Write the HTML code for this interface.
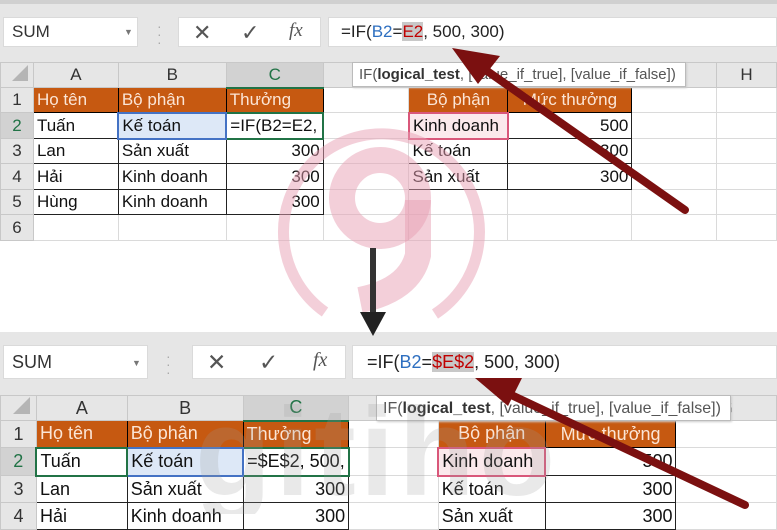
<!DOCTYPE html>
<html><head><meta charset="utf-8"><style>
body{margin:0;width:777px;height:514px;overflow:hidden;background:#fff;font-family:"Liberation Sans",sans-serif;position:relative}
.a{position:absolute}
.bar{background:#e6e6e6}
.box{background:#fff;border:1px solid #dadada;box-sizing:border-box}
table{border-collapse:collapse;table-layout:fixed;position:absolute}
td{border:1px solid #dadada;padding:0 3px;white-space:nowrap;overflow:hidden;color:#111}
td.h{background:#e6e6e6;color:#333;text-align:center;border-color:#c8c8c8}
td.hc{background:#d2d2d2;color:#217346;border-bottom:2px solid #217346}
td.rh{background:#e6e6e6;color:#333;text-align:center;border-color:#c8c8c8}
td.rhs{background:#d2d2d2;color:#217346}
td.o{background:#c65911;color:#fbe5d6;border-color:#000}
td.d{border:1px solid #222}
td.r{text-align:right}
.tip{position:absolute;background:#fff;border:1px solid #bbb;color:#555;box-shadow:1px 1px 2px #ccc;white-space:nowrap}
</style></head><body>

<div class="a bar" style="left:0;top:0;width:777px;height:62px"></div>
<div class="a" style="left:0;top:0;width:777px;height:4px;background:#d0d0d0"></div>
<div class="a box" style="left:3px;top:17px;width:135px;height:30px;font-size:17px;line-height:28px;padding-left:8px;color:#333">SUM<span style="position:absolute;left:120px;top:0;font-size:9px;color:#777">▼</span></div>
<div class="a" style="left:157px;top:22px;color:#aaa;font-size:14px;line-height:8px">·<br>·<br>·</div>
<div class="a box" style="left:178px;top:17px;width:143px;height:30px;color:#555">
<span class="a" style="left:14px;top:2px;font-size:22px">✕</span><span class="a" style="left:62px;top:2px;font-size:22px">✓</span><span class="a" style="left:110px;top:2px;font-family:'Liberation Serif',serif;font-style:italic;font-size:19px">fx</span></div>
<div class="a box" style="left:328px;top:17px;width:449px;height:30px;font-size:17px;line-height:28px;padding-left:12px;color:#222">=IF(<span style="color:#2e6fc0">B2</span>=<span style="color:#c00000;background:#c8c8c8">E2</span>, 500, 300)</div>

<table style="left:0;top:62px;font-size:17px">
<colgroup><col style="width:33px"><col style="width:85px"><col style="width:108px"><col style="width:97px"><col style="width:86px"><col style="width:99px"><col style="width:124px"><col style="width:85px"><col style="width:60px"></colgroup>
<tr style="height:25px"><td class="h"><span style="display:inline-block;width:0;height:0;border-left:16px solid transparent;border-bottom:16px solid #b5b5b5;margin-left:6px"></span></td><td class="h">A</td><td class="h">B</td><td class="h hc">C</td><td class="h">D</td><td class="h">E</td><td class="h">F</td><td class="h">G</td><td class="h">H</td></tr>
<tr style="height:25px"><td class="rh">1</td><td class="o">Họ tên</td><td class="o">Bộ phận</td><td class="o">Thưởng</td><td></td><td class="o" style="text-align:center">Bộ phận</td><td class="o" style="text-align:center">Mức thưởng</td><td></td><td></td></tr>
<tr style="height:26px"><td class="rh rhs">2</td><td class="d">Tuấn</td><td class="d" style="background:#dde8f7;border:2px solid #4472c4">Kế toán</td><td class="d" style="border:2px solid #217346">=IF(B2=E2,</td><td></td><td class="d" style="background:#fbe9ec;border:2px solid #d9577a">Kinh doanh</td><td class="d r">500</td><td></td><td></td></tr>
<tr style="height:25px"><td class="rh">3</td><td class="d">Lan</td><td class="d">Sản xuất</td><td class="d r">300</td><td></td><td class="d">Kế toán</td><td class="d r">300</td><td></td><td></td></tr>
<tr style="height:26px"><td class="rh">4</td><td class="d">Hải</td><td class="d">Kinh doanh</td><td class="d r">300</td><td></td><td class="d">Sản xuất</td><td class="d r">300</td><td></td><td></td></tr>
<tr style="height:25px"><td class="rh">5</td><td class="d">Hùng</td><td class="d">Kinh doanh</td><td class="d r">300</td><td></td><td></td><td></td><td></td><td></td></tr>
<tr style="height:26px"><td class="rh">6</td><td></td><td></td><td></td><td></td><td></td><td></td><td></td><td></td></tr>
</table>
<div class="tip" style="left:352px;top:62px;width:334px;height:25px;font-size:15px;line-height:24px;padding-left:6px;box-sizing:border-box">IF(<b style="color:#333">logical_test</b>, [value_if_true], [value_if_false])</div>

<div class="a bar" style="left:0;top:332px;width:777px;height:63px"></div>
<div class="a box" style="left:3px;top:345px;width:145px;height:34px;font-size:18px;line-height:32px;padding-left:8px;color:#333">SUM<span style="position:absolute;left:128px;top:1px;font-size:9px;color:#777">▼</span></div>
<div class="a" style="left:166px;top:352px;color:#aaa;font-size:14px;line-height:8px">·<br>·<br>·</div>
<div class="a box" style="left:192px;top:345px;width:154px;height:34px;color:#555">
<span class="a" style="left:14px;top:3px;font-size:23px">✕</span><span class="a" style="left:66px;top:3px;font-size:23px">✓</span><span class="a" style="left:120px;top:3px;font-family:'Liberation Serif',serif;font-style:italic;font-size:20px">fx</span></div>
<div class="a box" style="left:352px;top:345px;width:425px;height:34px;font-size:18px;line-height:32px;padding-left:14px;color:#222">=IF(<span style="color:#2e6fc0">B2</span>=<span style="color:#c00000;background:#c8c8c8">$E$2</span>, 500, 300)</div>

<table style="left:0;top:395px;font-size:18px">
<colgroup><col style="width:36px"><col style="width:91px"><col style="width:116px"><col style="width:105px"><col style="width:90px"><col style="width:107px"><col style="width:131px"><col style="width:101px"></colgroup>
<tr style="height:25px"><td class="h"><span style="display:inline-block;width:0;height:0;border-left:17px solid transparent;border-bottom:17px solid #b5b5b5;margin-left:6px"></span></td><td class="h">A</td><td class="h">B</td><td class="h hc">C</td><td class="h">D</td><td class="h">E</td><td class="h">F</td><td class="h">G</td></tr>
<tr style="height:27px"><td class="rh">1</td><td class="o">Họ tên</td><td class="o">Bộ phận</td><td class="o">Thưởng</td><td></td><td class="o" style="text-align:center">Bộ phận</td><td class="o" style="text-align:center">Mức thưởng</td><td></td></tr>
<tr style="height:28px"><td class="rh rhs">2</td><td class="d" style="border:2px solid #217346">Tuấn</td><td class="d" style="background:#dde8f7;border:2px solid #4472c4">Kế toán</td><td class="d" style="border:2px solid #217346">=$E$2, 500,</td><td></td><td class="d" style="background:#fbe9ec;border:2px solid #d9577a">Kinh doanh</td><td class="d r">500</td><td></td></tr>
<tr style="height:27px"><td class="rh">3</td><td class="d">Lan</td><td class="d">Sản xuất</td><td class="d r">300</td><td></td><td class="d">Kế toán</td><td class="d r">300</td><td></td></tr>
<tr style="height:27px"><td class="rh">4</td><td class="d">Hải</td><td class="d">Kinh doanh</td><td class="d r">300</td><td></td><td class="d">Sản xuất</td><td class="d r">300</td><td></td></tr>
</table>
<div class="tip" style="left:376px;top:395px;width:355px;height:26px;font-size:16px;line-height:25px;padding-left:6px;box-sizing:border-box">IF(<b style="color:#333">logical_test</b>, [value_if_true], [value_if_false])</div>

<svg class="a" style="left:0;top:0" width="777" height="514">
<g fill="none" stroke="#e8a0b4" stroke-opacity="0.5">
<path d="M325 312 A98 98 0 1 1 435 314" stroke-width="11"/>
<circle cx="380" cy="198" r="38" stroke-width="26"/>
<path d="M418 200 L418 255 Q410 290 360 300" stroke-width="26"/>
</g>
<text x="195" y="495" font-family="Liberation Sans,sans-serif" font-weight="bold" font-size="125" fill="#999" fill-opacity="0.22" letter-spacing="4">gitiho</text>
<line x1="373" y1="248" x2="373" y2="316" stroke="#333" stroke-width="6"/>
<polygon points="360,312 386,312 373,336" fill="#222"/>
<line x1="685" y1="210" x2="480" y2="66" stroke="#7b1010" stroke-width="8" stroke-linecap="round"/>
<polygon points="452,48 500,56 478,84" fill="#7b1010"/>
<line x1="745" y1="505" x2="505" y2="392" stroke="#7b1010" stroke-width="8" stroke-linecap="round"/>
<polygon points="475,378 522,378 508,406" fill="#7b1010"/>
</svg>
</body></html>
